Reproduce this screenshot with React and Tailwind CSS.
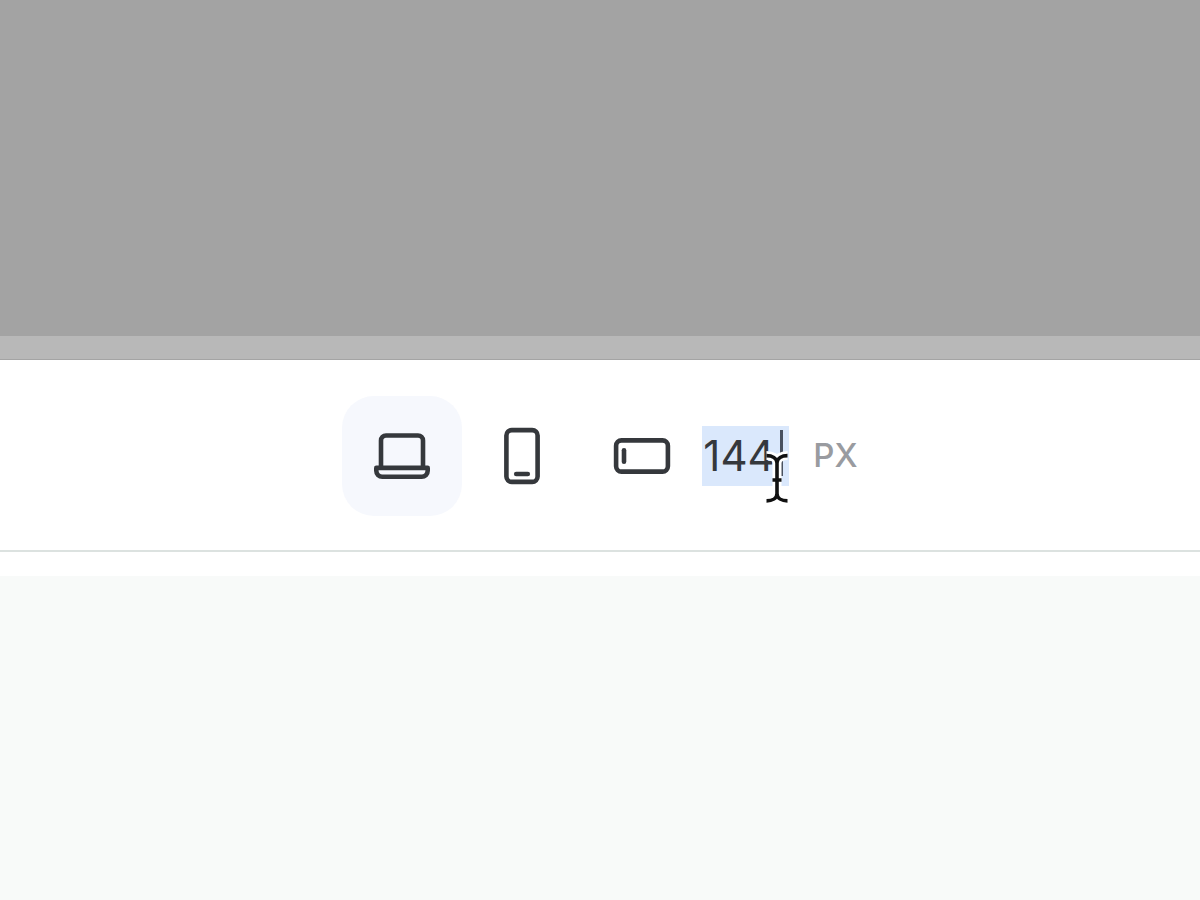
import { useState } from "react";

function LaptopIcon() {
  return (
    <svg viewBox="0 0 60 60" className="size-15" fill="none" stroke="currentColor" strokeWidth="4.6" aria-hidden="true">
      <path d="M9 41V14.5a5 5 0 0 1 5-5H46a5 5 0 0 1 5 5V41" />
      <path d="M4.3 41.9H55.7V44.8a6 6 0 0 1-6 6H10.3a6 6 0 0 1-6-6Z" strokeLinejoin="round" />
    </svg>
  );
}

function PhoneIcon() {
  return (
    <svg viewBox="0 0 60 60" className="size-15" fill="none" stroke="currentColor" strokeWidth="4.6" aria-hidden="true">
      <rect x="14.4" y="4.1" width="31.2" height="51.8" rx="5.4" />
      <path d="M24.2 48H35.8" strokeLinecap="round" />
    </svg>
  );
}

function LandscapeIcon() {
  return (
    <svg viewBox="0 0 60 60" className="size-15" fill="none" stroke="currentColor" strokeWidth="4.6" aria-hidden="true">
      <rect x="4.1" y="14.4" width="51.8" height="31.2" rx="5.4" />
      <path d="M12 24.2V35.8" strokeLinecap="round" />
    </svg>
  );
}

function TextCursor() {
  const shape =
    "M4.5 5.6C10 5.6 15 8 15 13V43.5C15 48.5 10 50.9 4.5 50.9M25.5 5.6C20 5.6 15 8 15 13M15 43.5C15 48.5 20 50.9 25.5 50.9M10.5 30H19.5";
  return (
    <svg viewBox="0 0 30 56" className="h-14 w-[30px]" fill="none" aria-hidden="true">
      <path d={shape} stroke="#fff" strokeWidth="9" />
      <path d={shape} stroke="#111" strokeWidth="3.6" />
    </svg>
  );
}

const devices = [
  { name: "Desktop", Icon: LaptopIcon },
  { name: "Phone", Icon: PhoneIcon },
  { name: "Phone landscape", Icon: LandscapeIcon },
];

export default function App() {
  const [device, setDevice] = useState("Desktop");
  const [width, setWidth] = useState("144");

  return (
    <div className="flex min-h-screen flex-col bg-white font-['Inter','Liberation_Sans',sans-serif]">
      <div className="h-84 bg-[#a3a3a3]" />
      <div className="h-6 border-b border-[#a4a4a4] bg-[#b8b8b8]" />
      <header className="flex items-center justify-center border-b-2 border-[#dce2e0] pt-9 pb-[34px]">
        <div className="flex">
          {devices.map(({ name, Icon }) => (
            <button
              key={name}
              type="button"
              aria-label={name}
              aria-pressed={device === name}
              onClick={() => setDevice(name)}
              className={`flex size-30 items-center justify-center rounded-[32px] text-[#35383c] ${
                device === name ? "bg-[#f6f8fd]" : ""
              }`}
            >
              <Icon />
            </button>
          ))}
        </div>
        <div className="relative">
          <input
            id="canvas-width"
            type="text"
            inputMode="numeric"
            value={width}
            onChange={(e) => setWidth(e.target.value)}
            className="block h-15 w-[87px] bg-[#dae8fc] pb-0.5 pl-px text-[42px] text-[#35383c] outline-none"
          />
          <span className="pointer-events-none absolute top-1 right-1.5 h-[46px] w-[3px] bg-[#4a5260]" />
          <span className="pointer-events-none absolute top-6 -right-[3px]">
            <TextCursor />
          </span>
        </div>
        <label htmlFor="canvas-width" className="ml-6 text-[33px] font-medium text-[#999ba0]">
          PX
        </label>
      </header>
      <main className="mt-6 flex-1 bg-[#f8faf9]" />
    </div>
  );
}
